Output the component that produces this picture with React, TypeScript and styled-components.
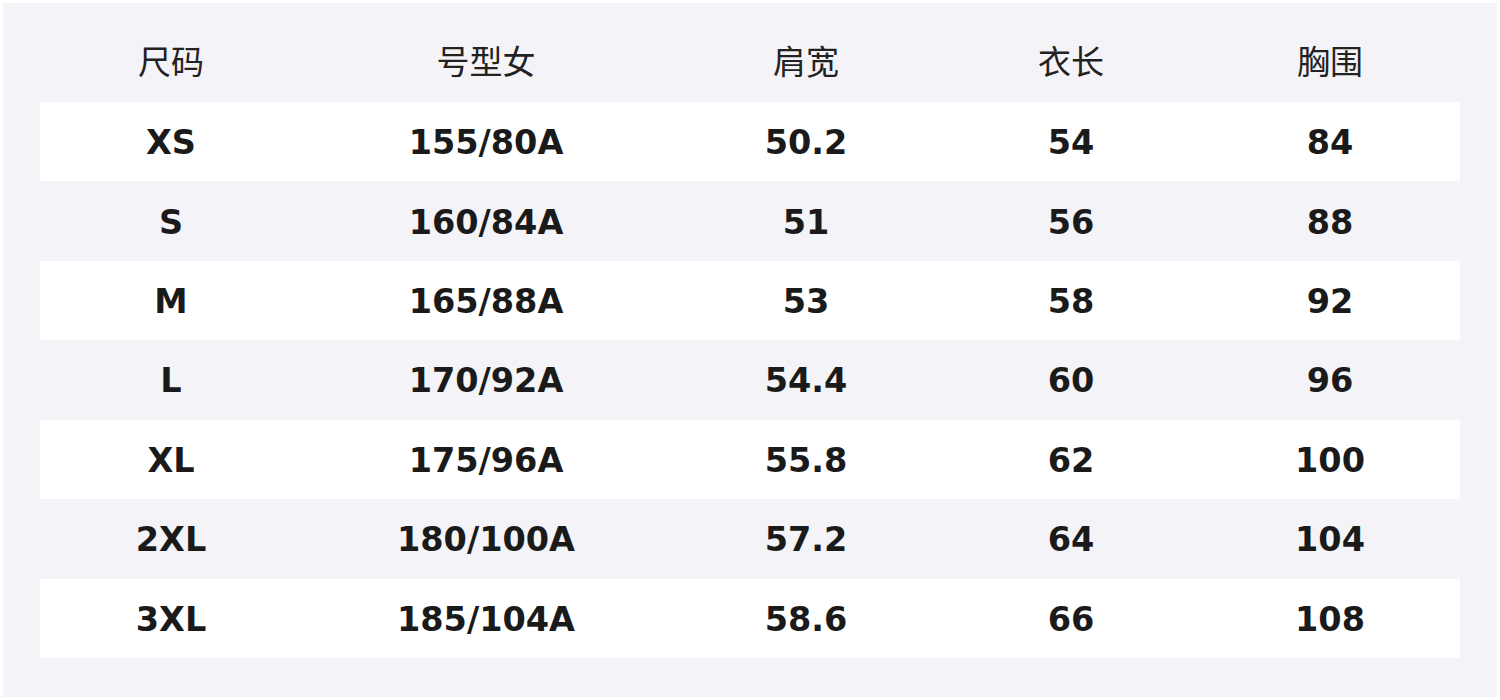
import React from "react";
import styled, { createGlobalStyle } from "styled-components";

const GlobalStyle = createGlobalStyle`
  html, body {
    margin: 0;
    padding: 0;
    background: #ffffff;
  }
`;

const columns = ["尺码", "号型女", "肩宽", "衣长", "胸围"];
const widths = [262, 368, 272, 258, 260];

const rows = [
  ["XS", "155/80A", "50.2", "54", "84"],
  ["S", "160/84A", "51", "56", "88"],
  ["M", "165/88A", "53", "58", "92"],
  ["L", "170/92A", "54.4", "60", "96"],
  ["XL", "175/96A", "55.8", "62", "100"],
  ["2XL", "180/100A", "57.2", "64", "104"],
  ["3XL", "185/104A", "58.6", "66", "108"],
];

const App = (): React.ReactElement => {
  return (
    <>
      <GlobalStyle />
      <Page>
        <Panel>
          <SizeTable>
            <colgroup>
              {widths.map((w, i) => (
                <col key={i} style={{ width: w }} />
              ))}
            </colgroup>
            <thead>
              <HeadRow>
                {columns.map((c) => (
                  <HeadCell key={c}>{c}</HeadCell>
                ))}
              </HeadRow>
            </thead>
            <tbody>
              {rows.map((r, i) => (
                <BodyRow key={r[0]} $white={i % 2 === 0}>
                  {r.map((v, j) => (
                    <Cell key={j}>{v}</Cell>
                  ))}
                </BodyRow>
              ))}
            </tbody>
          </SizeTable>
        </Panel>
      </Page>
    </>
  );
};

export default App;

const Page = styled.div`
  width: 1500px;
  height: 700px;
  box-sizing: border-box;
  padding: 3px;
  background: #ffffff;
`;

const Panel = styled.div`
  height: 100%;
  box-sizing: border-box;
  background: #f4f4f8;
  padding: 19px 37px 0 37px;
`;

const SizeTable = styled.table`
  width: 1420px;
  border-collapse: collapse;
  table-layout: fixed;
`;

const HeadRow = styled.tr`
  height: 80px;
`;

const HeadCell = styled.th`
  padding: 0 0 4px 0;
  text-align: center;
  vertical-align: middle;
  font-family: "Noto Sans CJK SC", "DejaVu Sans", sans-serif;
  font-weight: 400;
  font-size: 33px;
  color: #222222;
`;

const BodyRow = styled.tr<{ $white: boolean }>`
  height: 79.43px;
  background: ${(p) => (p.$white ? "#ffffff" : "transparent")};
`;

const Cell = styled.td`
  padding: 2px 0 0 0;
  text-align: center;
  vertical-align: middle;
  font-family: "DejaVu Sans", sans-serif;
  font-weight: 700;
  font-size: 33.5px;
  color: #1a1a1a;
`;
